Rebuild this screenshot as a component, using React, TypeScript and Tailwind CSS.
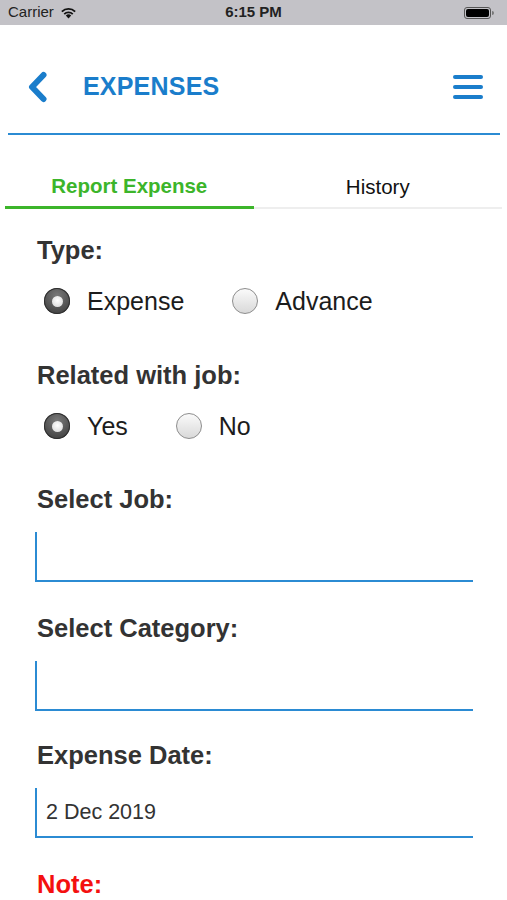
import React from 'react';

const font = { fontFamily: '"Liberation Sans", Arial, sans-serif' };

const Radio: React.FC<{ checked: boolean }> = ({ checked }) =>
  checked ? (
    <span className="flex h-[26px] w-[26px] items-center justify-center rounded-full bg-[radial-gradient(circle_at_50%_30%,#7a7a7a,#353535)] shadow-[inset_0_0_0_1px_#2e2e2e]">
      <span className="h-[11px] w-[11px] rounded-full bg-[radial-gradient(circle_at_50%_40%,#ffffff,#d4d4d4)]" />
    </span>
  ) : (
    <span className="h-[26px] w-[26px] rounded-full border border-[#8d8d8d] bg-[linear-gradient(180deg,#fafafa,#d9d9d9)]" />
  );

const RadioOption: React.FC<{ label: string; checked?: boolean; className?: string }> = ({ label, checked = false, className = '' }) => (
  <div className={`flex items-center gap-[17px] ${className}`}>
    <Radio checked={checked} />
    <span className="text-[25px] leading-none text-[#1c1c1c]">{label}</span>
  </div>
);

const Label: React.FC<{ children: React.ReactNode; red?: boolean }> = ({ children, red }) => (
  <div className={`pl-[37px] text-[25.5px] font-bold leading-[30px] ${red ? 'text-[#f41010]' : 'text-[#333333]'}`}>{children}</div>
);

const Field: React.FC<{ value?: string }> = ({ value }) => (
  <div className="ml-[35px] mr-[34px] mt-[18px] flex h-[50px] items-center border-b-2 border-l-2 border-[#2b8bd3] pl-[9px] text-[21.5px] text-[#333333]">
    {value}
  </div>
);

export default function App() {
  return (
    <div className="min-h-[900px] w-full overflow-hidden bg-white" style={font}>
      {/* status bar */}
      <div className="flex h-[25px] items-center justify-between bg-[#c3c2c7] px-[8px]">
        <div className="flex w-[120px] items-center gap-[6px]">
          <span className="text-[15px] text-[#222]">Carrier</span>
          <svg width="17" height="12" viewBox="0 0 17 12">
            <path d="M8.5 11.5 L5.8 8.6 A4 4 0 0 1 11.2 8.6 Z" fill="#111" />
            <path d="M3.6 6.4 A7 7 0 0 1 13.4 6.4 L12.1 7.8 A5.2 5.2 0 0 0 4.9 7.8 Z" fill="#111" />
            <path d="M1.2 3.9 A10.5 10.5 0 0 1 15.8 3.9 L14.5 5.3 A8.6 8.6 0 0 0 2.5 5.3 Z" fill="#111" />
          </svg>
        </div>
        <span className="text-[15px] font-bold text-[#222]">6:15 PM</span>
        <div className="flex w-[120px] items-center justify-end pr-[5px]">
          <div className="flex h-[12px] w-[27px] items-center rounded-[3px] border border-[#555] p-[1px]">
            <div className="h-full w-full rounded-[2px] bg-black" />
          </div>
          <div className="ml-[1px] h-[4px] w-[2px] rounded-r-sm bg-[#777]" />
        </div>
      </div>

      {/* header */}
      <div className="pb-[31px] pt-[47px]">
        <div className="flex h-[30px] items-center pl-[27px] pr-[24px]">
          <svg width="21" height="32" viewBox="0 0 21 32" className="shrink-0">
            <path d="M16.5 4 L5 16 L16.5 28" fill="none" stroke="#1a7dcb" strokeWidth="6" strokeLinecap="round" strokeLinejoin="round" />
          </svg>
          <span className="ml-[35px] text-[25px] font-bold tracking-[0.2px] text-[#1a7dcb]">EXPENSES</span>
          <div className="ml-auto flex w-[30px] flex-col gap-[6px]">
            <span className="h-[4px] rounded-full bg-[#1a7dcb]" />
            <span className="h-[4px] rounded-full bg-[#1a7dcb]" />
            <span className="h-[4px] rounded-full bg-[#1a7dcb]" />
          </div>
        </div>
      </div>
      <div className="ml-[8px] mr-[7px] h-[2px] bg-[#2b8bd3]" />

      {/* tabs */}
      <div className="ml-[5px] mr-[5px] flex">
        <div className="flex h-[74px] flex-1 flex-col justify-end">
          <div className="pb-[8px] text-center text-[20.5px] font-bold leading-[24px] text-[#3cb52a]">Report Expense</div>
          <div className="h-[3px] bg-[#3cb52a]" />
        </div>
        <div className="flex h-[74px] flex-1 flex-col justify-end">
          <div className="pb-[8px] text-center text-[20.5px] leading-[24px] text-[#111]">History</div>
          <div className="mb-[0.5px] h-[2px] bg-[#eeeeee]" />
        </div>
      </div>

      {/* form */}
      <div className="pt-[26px]">
        <Label>Type:</Label>
        <div className="mt-[23px] flex items-center pl-[44px]">
          <RadioOption label="Expense" checked />
          <RadioOption label="Advance" className="ml-[48px]" />
        </div>

        <div className="mt-[46px]">
          <Label>Related with job:</Label>
        </div>
        <div className="mt-[23px] flex items-center pl-[44px]">
          <RadioOption label="Yes" checked />
          <RadioOption label="No" className="ml-[48px]" />
        </div>

        <div className="mt-[45px]">
          <Label>Select Job:</Label>
        </div>
        <Field />

        <div className="mt-[31px]">
          <Label>Select Category:</Label>
        </div>
        <Field />

        <div className="mt-[29px]">
          <Label>Expense Date:</Label>
        </div>
        <Field value="2 Dec 2019" />

        <div className="mt-[31px]">
          <Label red>Note:</Label>
        </div>
      </div>
    </div>
  );
}
